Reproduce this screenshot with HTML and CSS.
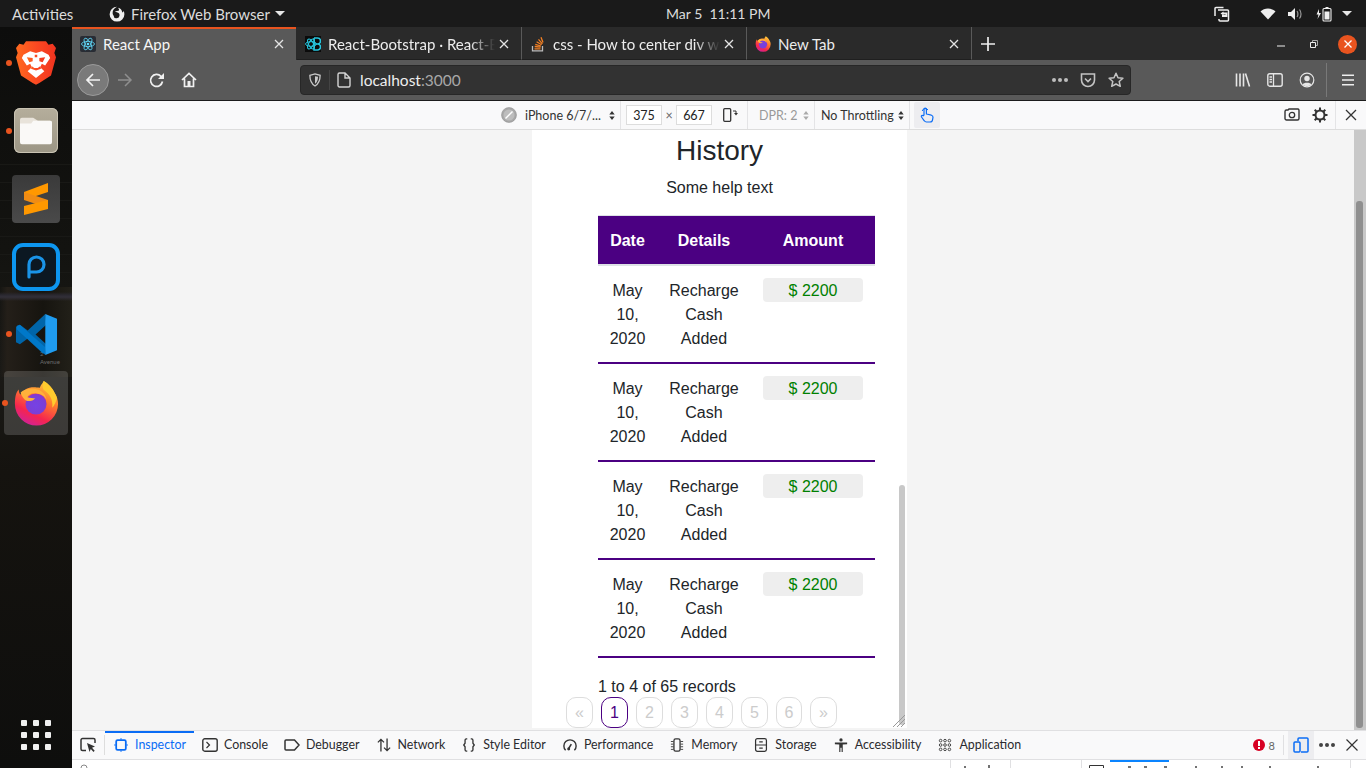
FILE: index.html
```html
<!DOCTYPE html>
<html lang="en">
<head>
<meta charset="utf-8">
<title>React App</title>
<link rel="stylesheet" href="styles.css">
</head>
<body>
<header class="topbar">
  <span class="activities">Activities</span>
  <span class="appmenu">
    <svg class="app-ico" viewBox="0 0 16 16"><path fill="#eee" d="M8 .8a7.4 7.4 0 1 0 7.4 7.4c0-1.2-.3-2.400-.8-3.400-.2 1-.7 1.500-1.300 1.700C13 4 11.400 2 9 1.700c.8.900 1.200 1.800 1 2.800-1 .2-3 .5-4 1.500.7 0 1.500 0 2.500.5a3 3 0 1 1-4 3c-.7-.7-1-1.800-.8-3.200C3.500 4.800 5 2 8 .8z"/></svg>
    <span>Firefox Web Browser</span><i class="caret"></i>
  </span>
  <span class="clock">Mar 5&nbsp; 11:11 PM</span>
  <span class="tray">
    <svg class="tray-a" viewBox="0 0 16 16"><path fill="none" stroke="#eee" stroke-width="1.500" d="M1 10V2.500a1 1 0 0 1 1-1h7.500M4 4h9.500a1 1 0 0 1 1 1V14a1 1 0 0 1-1 1H6a1 1 0 0 1-1-1v-1"/><path fill="none" stroke="#eee" stroke-width="1.800" d="M8 10h4.500V7.500H9"/><path fill="#eee" d="M9.500 5.500v4L6.500 7.500z"/></svg>
    <svg class="tray-b" viewBox="0 0 16 16"><path fill="#eee" d="M8 13.500L.5 5.500C2.500 3.500 5 2.500 8 2.500s5.500 1 7.500 3z"/></svg>
    <svg class="tray-c" viewBox="0 0 16 16"><path fill="#eee" d="M1 6h3l4-4v12l-4-4H1z"/><path fill="none" stroke="#999" stroke-width="1.200" d="M10 5c1.200 1.500 1.200 4.500 0 6M12.500 3.500c2 2.500 2 6.500 0 9"/></svg>
    <svg class="tray-d" viewBox="0 0 16 16"><path fill="#eee" d="M3 3L.5 8.500H2.500L1.500 13 5 7H3z"/><rect x="7" y="2.500" width="8" height="12.500" rx="1" fill="none" stroke="#eee" stroke-width="1.100"/><rect x="8.500" y="5.500" width="5" height="8" fill="#eee"/><rect x="9.500" y="1" width="3" height="1.500" fill="#eee"/></svg>
    <i class="caret"></i>
  </span>
</header>

<div class="desktop">
  <nav class="dock">
    <span class="wall-text">2<br>Avenue</span>
    <div class="dock-item brave">
      <i class="run-dot"></i>
      <svg viewBox="0 0 48 52">
        <defs><linearGradient id="brv" x1="0" y1="0" x2="1" y2="0"><stop offset="0" stop-color="#ff6a1f"/><stop offset=".5" stop-color="#fb4a22"/><stop offset="1" stop-color="#f0331f"/></linearGradient></defs>
        <path fill="url(#brv)" d="M12 0h24l3 4 5-1 4 5-2 6 2 5-6 22-14 9-4 2-4-2-14-9-6-22 2-5-2-6 4-5 5 1z"/>
        <path fill="#fff" d="M9 16l8-4 7 2 7-2 8 4 2 4-6 9-4-2-2 4 5 5-10 8-10-8 5-5-2-4-4 2-6-9z"/>
        <path fill="url(#brv)" d="M13 19l7 1v4l-4 1zM35 19l-7 1v4l4 1zM22.500 16h3v3h-3zM19 30l3 2h4l3-2 1 3-6 2-6-2z"/>
      </svg>
    </div>
    <div class="dock-item files">
      <i class="run-dot"></i>
      <span class="files-tile"><svg viewBox="0 0 34 28"><path fill="#e8e3da" d="M2 0h12l5 3h13a2 2 0 0 1 2 2v8H0V2a2 2 0 0 1 2-2z"/><path fill="#faf9f7" d="M14 3h18a2 2 0 0 1 2 2v21a2 2 0 0 1-2 2H2a2 2 0 0 1-2-2V6h12z"/></svg></span>
    </div>
    <div class="dock-item sublime">
      <span class="sublime-tile"><svg viewBox="0 0 24 32"><path fill="#ff9800" d="M24 0v9L0 17V9z"/><path fill="#f08c14" d="M0 9l24 8v8L0 17z"/><path fill="#ff9800" d="M24 17v9L0 32v-9z"/></svg></span>
    </div>
    <div class="dock-item pstorm">
      <span class="p-tile"><svg viewBox="0 0 20 24"><path fill="none" stroke="#1a94e8" stroke-width="3.200" stroke-linecap="round" d="M3 22V9.500a7.500 7.500 0 1 1 7.500 7.500H5"/></svg></span>
    </div>
    <div class="dock-item vscode">
      <i class="run-dot"></i>
      <svg viewBox="0 0 44 44"><path fill="#0065a9" d="M31 1L13 18 5 12 1 14v16l4 2 8-6 18 17 1-11-11-10 11-10z"/><path fill="#007acc" d="M2 13l3-1 26 23v7l-3-1L2 17z" opacity=".9"/><path fill="#1f9cf0" d="M31 1l12 5v32l-12 5z"/></svg>
    </div>
    <div class="dock-item firefox">
      <i class="run-dot"></i>
      <svg viewBox="0 0 48 48">
        <defs>
          <linearGradient id="ffa" x1="0.800" y1="0" x2="0.300" y2="1"><stop offset="0" stop-color="#ffd43b"/><stop offset=".4" stop-color="#ff7a2e"/><stop offset=".75" stop-color="#f5254f"/><stop offset="1" stop-color="#d0219a"/></linearGradient>
          <radialGradient id="ffb" cx=".5" cy=".55" r=".55"><stop offset="0" stop-color="#7542e5"/><stop offset=".8" stop-color="#7b3ed6"/><stop offset="1" stop-color="#a12dbc"/></radialGradient>
        </defs>
        <path fill="url(#ffa)" d="M2 25C2 18 3 13 6 10c0 3 1 5 2 5 2-3 5-6 9-7 6-1 7 0 11 0 1-3 4-6 4-7 5 3 9 7 11 12 3 4 4 8 4 12a22.500 22.500 0 0 1-45 0z"/>
        <circle cx="24" cy="25" r="11" fill="url(#ffb)"/>
        <path fill="#ffb13b" d="M8 13c3-3 10-6 18-3 5 2 9 6 9 12 0-4-4-7-10-8-5-1-9 1-10 4 3 1 6 1 8 1-1 2-4 3-7 3-3 0-7-4-8-9z"/>
        <path fill="#ffcb2e" d="M32 1c6 3 12 11 14 18-1 3-3 8-5 10 1-9-3-14-8-18-3-2-2-7-1-10z"/>
      </svg>
    </div>
    <div class="dock-grid"><i></i><i></i><i></i><i></i><i></i><i></i><i></i><i></i><i></i></div>
  </nav>

  <main class="browser">
    <div class="tabbar">
      <div class="tab active">
        <svg class="fav" viewBox="0 0 16 16"><rect width="16" height="16" rx="2" fill="#282c34"/><g fill="none" stroke="#61dafb" stroke-width=".8"><ellipse cx="8" cy="8" rx="6.500" ry="2.600"/><ellipse cx="8" cy="8" rx="6.500" ry="2.600" transform="rotate(60 8 8)"/><ellipse cx="8" cy="8" rx="6.500" ry="2.600" transform="rotate(120 8 8)"/></g><circle cx="8" cy="8" r="1.300" fill="#61dafb"/></svg>
        <span class="tab-title">React App</span>
        <svg class="tab-x" viewBox="0 0 10 10"><path stroke="#e4e4e4" stroke-width="1.300" d="M1 1l8 8M9 1l-8 8"/></svg>
      </div>
      <div class="tab">
        <svg class="fav" viewBox="0 0 16 16"><rect width="16" height="16" fill="#0b0b0b"/><g fill="none" stroke="#28c5dd" stroke-width="1"><ellipse cx="6" cy="8" rx="5.500" ry="2.300"/><ellipse cx="6" cy="8" rx="5.500" ry="2.300" transform="rotate(60 6 8)"/><ellipse cx="6" cy="8" rx="5.500" ry="2.300" transform="rotate(120 6 8)"/></g><path fill="none" stroke="#28c5dd" stroke-width="1.500" d="M9 2h3.500a2.500 2.500 0 0 1 0 6H9m3.500 0a3 3 0 0 1 0 6H9V2"/></svg>
        <span class="tab-title fade">React-Bootstrap · React-B</span>
        <svg class="tab-x" viewBox="0 0 10 10"><path stroke="#e4e4e4" stroke-width="1.300" d="M1 1l8 8M9 1l-8 8"/></svg>
      </div>
      <div class="tab">
        <svg class="fav" viewBox="0 0 16 16"><path fill="none" stroke="#bcbbbb" stroke-width="1.300" d="M2.500 10v4.800h10V10"/><path fill="none" stroke="#f48024" stroke-width="1.300" d="M4.500 12.800h6M4.700 10.500l5.900.6M5.300 8.300l5.600 1.700M6.600 5.800l5 3M8.500 3.400l3.900 4.500M11 1.200l2 5.400"/></svg>
        <span class="tab-title fade">css - How to center div w</span>
        <svg class="tab-x" viewBox="0 0 10 10"><path stroke="#e4e4e4" stroke-width="1.300" d="M1 1l8 8M9 1l-8 8"/></svg>
      </div>
      <div class="tab">
        <svg class="fav" viewBox="0 0 48 48"><path fill="url(#ffa)" d="M2 25C2 18 3 13 6 10c0 3 1 5 2 5 2-3 5-6 9-7 6-1 7 0 11 0 1-3 4-6 4-7 5 3 9 7 11 12 3 4 4 8 4 12a22.500 22.500 0 0 1-45 0z"/><circle cx="24" cy="25" r="12.500" fill="url(#ffb)"/><path fill="#ffb13b" d="M8 13c3-3 10-6 18-3 5 2 9 6 9 12 0-4-4-7-10-8-5-1-9 1-10 4 3 1 6 1 8 1-1 2-4 3-7 3-3 0-7-4-8-9z"/></svg>
        <span class="tab-title">New Tab</span>
        <svg class="tab-x" viewBox="0 0 10 10"><path stroke="#e4e4e4" stroke-width="1.300" d="M1 1l8 8M9 1l-8 8"/></svg>
      </div>
      <svg class="newtab" viewBox="0 0 14 14"><path stroke="#eee" stroke-width="1.700" d="M7 0v14M0 7h14"/></svg>
      <div class="winctl">
        <svg class="w-min" viewBox="0 0 8 2"><rect width="8" height="1" y=".5" fill="#eee"/></svg>
        <svg class="w-max" viewBox="0 0 8 8"><path fill="none" stroke="#eee" d="M.5 2.500h5v5h-5z"/><path fill="none" stroke="#aaa" d="M2.500 2V.5h5v5H6"/></svg>
        <span class="w-close"><svg viewBox="0 0 8 8"><path stroke="#fff" stroke-width="1.300" d="M.5.5l7 7M7.500.5l-7 7"/></svg></span>
      </div>
    </div>

    <div class="navbar">
      <span class="back"><svg viewBox="0 0 16 16"><path fill="none" stroke="#f2f2f2" stroke-width="1.700" d="M15 8H2M8 2L2 8l6 6"/></svg></span>
      <svg class="nav-ico fwd" viewBox="0 0 16 16"><path fill="none" stroke="#8f8f8f" stroke-width="1.500" d="M1 8h13M8 2l6 6-6 6"/></svg>
      <svg class="nav-ico" viewBox="0 0 16 16"><path fill="none" stroke="#f0f0f0" stroke-width="1.700" d="M13.500 9.500a6 6 0 1 1-1.500-5.200l2 1.700"/><path fill="#f0f0f0" d="M15 1v6H9z"/></svg>
      <svg class="nav-ico" viewBox="0 0 16 16"><path fill="none" stroke="#f0f0f0" stroke-width="1.700" d="M1 8l7-6.500L15 8M3.500 6.500V14.500h9V6.500"/><rect x="6.500" y="9" width="3" height="5" fill="#f0f0f0"/></svg>
      <div class="urlbar">
        <svg class="shield" viewBox="0 0 14 16"><path fill="none" stroke="#c8c8c8" stroke-width="1.500" d="M1 2.500C3 2 5 1.500 7 1c2 .5 4 1 6 1.500 0 5-1 9.500-6 12.500C2 12 1 7.500 1 2.500z"/><path fill="#c8c8c8" d="M7 3.500l3.500.8C10.500 8 9.500 10.500 7 12.500z"/></svg>
        <i class="url-sep"></i>
        <svg class="pageico" viewBox="0 0 14 16"><path fill="none" stroke="#d4d4d4" stroke-width="1.400" d="M1 2.500a1.500 1.500 0 0 1 1.500-1.500H8l5 5v7.500a1.500 1.500 0 0 1-1.500 1.500h-9A1.500 1.500 0 0 1 1 13.500zM8 1v5h5"/></svg>
        <span class="url">localhost<span class="url-dim">:3000</span></span>
        <span class="dots"><i></i><i></i><i></i></span>
        <svg class="pocket" viewBox="0 0 16 16"><path fill="none" stroke="#c4c4c4" stroke-width="1.600" d="M1.500 2h13v6a6.500 6.500 0 0 1-13 0z"/><path fill="none" stroke="#c4c4c4" stroke-width="1.600" d="M5 6.500l3 3 3-3"/></svg>
        <svg class="star" viewBox="0 0 16 16"><path fill="none" stroke="#c4c4c4" stroke-width="1.500" stroke-linejoin="round" d="M8 1.300l2 4.500 4.900.5-3.700 3.200 1.100 4.800L8 12l-4.300 2.300 1.100-4.800L1.100 6.300 6 5.800z"/></svg>
      </div>
      <svg class="lib" viewBox="0 0 16 16"><path stroke="#e6e6e6" stroke-width="1.600" fill="none" d="M1.500 1.500v13M5 1.500v13M8.500 1.500v13M10.500 1.500l4 13"/></svg>
      <svg class="side" viewBox="0 0 16 16"><rect x=".8" y="1.800" width="14.400" height="12.400" rx="2" fill="none" stroke="#e6e6e6" stroke-width="1.400"/><path stroke="#e6e6e6" stroke-width="1.300" d="M6.500 2v12M2.500 5H5M2.500 7.500H5M2.500 10H5"/></svg>
      <svg class="acct" viewBox="0 0 16 16"><circle cx="8" cy="8" r="6.800" fill="none" stroke="#e6e6e6" stroke-width="1.200"/><circle cx="8" cy="6.500" r="2.700" fill="#e6e6e6"/><path fill="#e6e6e6" d="M3.500 12.500c1-2.500 8-2.500 9 0-2 2-7 2-9 0z"/></svg>
      <i class="nav-sep"></i>
      <svg class="menu" viewBox="0 0 12 12"><path stroke="#eee" stroke-width="1.600" d="M0 1.200h12M0 6h12M0 10.800h12"/></svg>
    </div>

    <div class="rdm">
      <svg class="noglobe" viewBox="0 0 16 16"><circle cx="8" cy="8" r="7.500" fill="#a8a8a8" stroke="#888" stroke-width=".5"/><circle cx="8" cy="8" r="5.500" fill="#bdbdbd"/><path stroke="#fff" stroke-width="1.500" d="M4.500 11.500l7-7"/></svg>
      <span class="rdm-label dev">iPhone 6/7/...</span>
      <svg class="updown" viewBox="0 0 6 10"><path fill="#333" d="M3 0l3 4H0zM3 10L0 6h6z"/></svg>
      <i class="rdm-sep"></i>
      <span class="num first">375</span>
      <span class="times">×</span>
      <span class="num">667</span>
      <svg class="rotate" viewBox="0 0 16 14"><rect x=".7" y=".7" width="7" height="12.600" rx="1" fill="none" stroke="#333" stroke-width="1.300"/><path fill="none" stroke="#333" d="M10 3h3v3"/><path fill="#333" d="M11 5h4l-2 2.500z"/></svg>
      <i class="rdm-sep r2"></i>
      <span class="rdm-label dpr">DPR: 2</span>
      <svg class="updown dim" viewBox="0 0 6 10"><path fill="#aaa" d="M3 0l3 4H0zM3 10L0 6h6z"/></svg>
      <i class="rdm-sep r3"></i>
      <span class="rdm-label thr">No Throttling</span>
      <svg class="updown" viewBox="0 0 6 10"><path fill="#333" d="M3 0l3 4H0zM3 10L0 6h6z"/></svg>
      <i class="rdm-sep r4"></i>
      <span class="touch"><svg viewBox="0 0 14 16"><path fill="none" stroke="#0a6cf5" stroke-width="1.200" stroke-linejoin="round" d="M4 8V2.300a1.200 1.200 0 0 1 2.400 0V7l5 1.200c1 .3 1.600 1 1.600 2l-.4 2.400c-.2 1.500-1 2.400-2.600 2.400H6.500c-1 0-1.700-.4-2.200-1.200L1.500 10c-.7-1.300.8-2.200 1.600-1.200z"/><path fill="none" stroke="#0a6cf5" d="M2.200 4a3.200 3.200 0 0 1 5.800-1"/></svg></span>
      <svg class="cam" viewBox="0 0 16 14"><path fill="none" stroke="#333" stroke-width="1.400" d="M1 3.500A1.500 1.500 0 0 1 2.500 2H4l1-1h9a1.500 1.500 0 0 1 1 1.500v8a1.500 1.500 0 0 1-1.500 1.500h-11A1.500 1.500 0 0 1 1 10.500z"/><circle cx="8" cy="7" r="2.700" fill="none" stroke="#333" stroke-width="1.300"/></svg>
      <svg class="gear" viewBox="0 0 16 16"><g stroke="#333" stroke-width="2"><path d="M8 .5v15M.5 8h15M2.700 2.700l10.600 10.600M13.300 2.700L2.700 13.300"/></g><circle cx="8" cy="8" r="4.500" fill="#f9f9fa" stroke="#333" stroke-width="2"/></svg>
      <i class="rdm-sep r5"></i>
      <svg class="rdm-x" viewBox="0 0 12 12"><path stroke="#333" stroke-width="1.300" d="M1 1l10 10M11 1L1 11"/></svg>
    </div>

    <div class="viewport">
      <section class="phone">
        <h1 class="title">History</h1>
        <p class="help">Some help text</p>
        <table class="history">
          <colgroup><col class="c1"><col class="c2"><col class="c3"></colgroup>
          <thead><tr><th>Date</th><th>Details</th><th>Amount</th></tr></thead>
          <tbody>
            <tr><td>May 10, 2020</td><td>Recharge Cash Added</td><td><span class="amount">$ 2200</span></td></tr>
            <tr><td>May 10, 2020</td><td>Recharge Cash Added</td><td><span class="amount">$ 2200</span></td></tr>
            <tr><td>May 10, 2020</td><td>Recharge Cash Added</td><td><span class="amount">$ 2200</span></td></tr>
            <tr><td>May 10, 2020</td><td>Recharge Cash Added</td><td><span class="amount">$ 2200</span></td></tr>
          </tbody>
        </table>
        <p class="records">1 to 4 of 65 records</p>
        <ul class="pager">
          <li>«</li><li class="on">1</li><li>2</li><li>3</li><li>4</li><li>5</li><li>6</li><li>»</li>
        </ul>
        <i class="phone-thumb"></i>
        <svg class="resize" viewBox="0 0 12 12"><path stroke="#999" d="M0 12L12 0M4 12l8-8M8 12l4-4"/></svg>
      </section>
      <div class="outer-scroll"><i></i></div>
    </div>

    <div class="devtabs">
      <svg class="pick" viewBox="0 0 16 16"><path fill="none" stroke="#333" stroke-width="1.500" d="M6 13.500H2.500a1.500 1.500 0 0 1-1.500-1.500V3a1.500 1.500 0 0 1 1.500-1.500h11A1.500 1.500 0 0 1 15 3v3"/><path fill="#333" d="M7 6l8 3.500-3 1.300 2.700 3-1.200 1.200-2.700-3L9.500 15z"/></svg>
      <i class="pick-sep"></i>
      <span class="dt sel"><svg viewBox="0 0 16 16"><rect x="2.500" y="2.500" width="11" height="11" rx="1.500" fill="none" stroke="#0a6cf5" stroke-width="2"/><path stroke="#0a6cf5" d="M8 0v2M8 14v2M0 8h2M14 8h2"/></svg>Inspector</span>
      <span class="dt"><svg viewBox="0 0 16 14"><rect x=".8" y=".8" width="14.400" height="12.400" rx="2" fill="none" stroke="#333" stroke-width="1.400"/><path fill="none" stroke="#333" stroke-width="1.200" d="M4.500 4l3 3-3 3"/></svg>Console</span>
      <span class="dt"><svg viewBox="0 0 16 12"><path fill="none" stroke="#333" stroke-width="1.500" d="M2 1h8.500l4.500 5-4.500 5H2a1 1 0 0 1-1-1V2a1 1 0 0 1 1-1z"/></svg>Debugger</span>
      <span class="dt"><svg viewBox="0 0 16 16"><path fill="none" stroke="#333" stroke-width="1.500" d="M4.500 15.500V1.500M1 5l3.500-3.500L8 5M11.500.5v14M8 11l3.500 3.500L15 11"/></svg>Network</span>
      <span class="dt"><svg viewBox="0 0 14 16"><path fill="none" stroke="#333" stroke-width="1.500" d="M5 1H4a1.500 1.500 0 0 0-1.500 1.500V6L1 8l1.500 2v3.500A1.500 1.500 0 0 0 4 15h1M9 1h1a1.500 1.500 0 0 1 1.500 1.500V6L13 8l-1.500 2v3.500A1.500 1.500 0 0 1 10 15H9"/></svg>Style Editor</span>
      <span class="dt"><svg viewBox="0 0 16 16"><path fill="none" stroke="#333" stroke-width="1.600" d="M3 14A7 7 0 1 1 13 14"/><path stroke="#333" stroke-width="1.800" d="M6.500 12l3-5"/><circle cx="6.500" cy="12.500" r="1.700" fill="#333"/></svg>Performance</span>
      <span class="dt"><svg viewBox="0 0 16 16"><rect x="4.500" y="1" width="7" height="14" rx="2" fill="none" stroke="#333" stroke-width="1.500"/><path stroke="#333" d="M1 4h3M1 7h3M1 10h3M1 13h3M12 4h3M12 7h3M12 10h3M12 13h3"/></svg>Memory</span>
      <span class="dt"><svg viewBox="0 0 14 16"><rect x=".8" y=".8" width="12.400" height="14.400" rx="2" fill="none" stroke="#333" stroke-width="1.400"/><path stroke="#333" stroke-width="1.300" d="M1 8h12M5 4.500h4M5 11.500h4"/></svg>Storage</span>
      <span class="dt"><svg viewBox="0 0 16 16"><circle cx="8" cy="2.200" r="1.900" fill="#333"/><path fill="#333" d="M1 5h14v2l-5 .5V16H8.700V11H7.300v5H6V7.500L1 7z"/></svg>Accessibility</span>
      <span class="dt"><svg viewBox="0 0 16 16"><g fill="none" stroke="#333"><circle cx="3" cy="3" r="1.500"/><circle cx="8" cy="3" r="1.500"/><circle cx="13" cy="3" r="1.500"/><circle cx="3" cy="8" r="1.500"/><circle cx="8" cy="8" r="1.500"/><circle cx="13" cy="8" r="1.500"/><circle cx="3" cy="13" r="1.500"/><circle cx="8" cy="13" r="1.500"/><circle cx="13" cy="13" r="1.500"/></g></svg>Application</span>
      <span class="errs"><svg viewBox="0 0 12 12"><circle cx="6" cy="6" r="6" fill="#d70022"/><rect x="5" y="2" width="2" height="5" fill="#fff"/><rect x="5" y="8" width="2" height="2" fill="#fff"/></svg>8</span>
      <i class="dev-sep"></i>
      <span class="dock-side"><svg viewBox="0 0 16 16"><path fill="none" stroke="#0a6cf5" stroke-width="1.500" d="M5 4V2a1 1 0 0 1 1-1h8a1 1 0 0 1 1 1v12a1 1 0 0 1-1 1H8"/><rect x="1" y="5" width="6" height="10" rx="1" fill="none" stroke="#0a6cf5" stroke-width="1.500"/></svg></span>
      <span class="more"><i></i><i></i><i></i></span>
      <svg class="dev-x" viewBox="0 0 12 12"><path stroke="#333" stroke-width="1.200" d="M.5.500l11 11M11.500.500l-11 11"/></svg>
    </div>
    <div class="devpanel">
      <svg class="panel-strip" viewBox="0 0 1294 8">
        <path stroke="#e0e0e2" d="M878.500 0v8M938.500 0v8M1009.500 0v8M1278.500 0v8"/>
        <path stroke="#0a84ff" stroke-width="2" d="M1038 1h59"/>
        <path fill="none" stroke="#888" d="M9 8a3 3 0 0 1 6 0"/>
        <path stroke="#444" stroke-width="1.500" d="M893 6v2M917 5v3M1056 7h3M1072 7h3M1092 7h3M1124 6v2M1150 6v2M1170 6v2M1198 6v2M1246 6v2"/>
        <path fill="none" stroke="#333" d="M1017.500 8V5.500h14V8"/>
      </svg>
    </div>
  </main>
</div>
</body>
</html>
```
FILE: styles.css
```css
* { box-sizing: border-box; }
html, body { margin: 0; padding: 0; }
body { width: 1366px; height: 768px; overflow: hidden; background: #111; font-family: "Lato", "Noto Sans", sans-serif; }
i { display: block; font-style: normal; }
svg { display: block; flex: none; }

/* GNOME top bar */
.topbar { height: 27px; background: #1a1a1a; color: #dcdcdc; font-size: 15px; display: flex; align-items: center; white-space: nowrap; }
.activities { margin-left: 12px; width: 97px; }
.appmenu { display: flex; align-items: center; width: 557px; }
.app-ico { width: 16px; height: 16px; margin-right: 6px; }
.caret { width: 0; height: 0; border: 5px solid transparent; border-top: 5px solid #e6e6e6; border-bottom: 0; margin-left: 5px; }
.clock { width: 548px; font-size: 14px; }
.tray { display: flex; align-items: center; }
.tray-a { width: 16px; height: 16px; }
.tray-b { width: 16px; height: 16px; margin-left: 30px; }
.tray-c { width: 16px; height: 16px; margin-left: 11px; }
.tray-d { width: 16px; height: 16px; margin-left: 13px; }
.tray .caret { margin-left: 10px; }

.desktop { display: flex; height: 741px; }

/* Dock */
.dock { width: 72px; position: relative; display: flex; flex-direction: column; align-items: center;
  background:
    linear-gradient(180deg, transparent 265px, #2a2830 268px, #322f38 270px, transparent 274px),
    linear-gradient(90deg, transparent 0, #241f19 10%, #16140f 60%, #222019 100%) 0 260px / 100% 90px no-repeat,
    repeating-linear-gradient(180deg, transparent 0, transparent 17px, #191916 17px, #191916 18px) 0 120px / 100% 130px no-repeat,
    linear-gradient(180deg, #0d0d0c 0, #131310 30%, #1a1916 46%, #15130f 60%, #0e0e0d 100%); }
.wall-text { position: absolute; left: 40px; top: 323px; font-size: 6px; line-height: 8px; color: #6c6c6c; }
.dock-item { position: relative; display: flex; justify-content: center; align-items: center; width: 64px; }
.run-dot { position: absolute; left: 2px; top: 50%; width: 6px; height: 6px; margin-top: -3px; border-radius: 50%; background: #e9541f; }
.brave { height: 68px; margin-top: 2px; }
.brave svg { width: 40px; height: 48px; }
.files { height: 57px; margin-top: 5px; }
.files-tile { width: 44px; height: 45px; border-radius: 6px; background: linear-gradient(#b5ae9c, #9c9685); box-shadow: inset 0 0 0 1px #c9c3b3; display: flex; align-items: center; justify-content: center; }
.files-tile svg { width: 32px; height: 28px; }
.sublime { height: 64px; margin-top: 8px; }
.sublime-tile { width: 48px; height: 48px; border-radius: 4px; background: linear-gradient(#3a3a3a, #4a4a4a); display: flex; align-items: center; justify-content: center; }
.sublime-tile svg { width: 24px; height: 32px; }
.pstorm { height: 64px; margin-top: 4px; }
.p-tile { width: 48px; height: 48px; border: 4px solid #0d96f0; border-radius: 11px; background: #0c1822; display: flex; align-items: center; justify-content: center; }
.p-tile svg { width: 20px; height: 24px; }
.vscode { height: 64px; margin-top: 3px; }
.vscode svg { width: 43px; height: 43px; }
.firefox { height: 64px; margin-top: 5px; background: rgba(255,255,255,.16); border-radius: 4px; }
.firefox svg { width: 46px; height: 48px; }
.firefox .run-dot { left: -2px; }
.dock-grid { margin-top: auto; margin-bottom: 18px; display: grid; grid-template-columns: repeat(3, 6px); grid-auto-rows: 6px; gap: 6px; }
.dock-grid i { background: #f0f0f0; border-radius: 1px; }

/* Browser */
.browser { width: 1294px; display: flex; flex-direction: column; background: #f5f5f5; }
.tabbar { height: 33px; background: #2a2a2a; display: flex; align-items: stretch; }
.tab { width: 225px; display: flex; align-items: center; padding: 1px 8px 0; color: #ececec; font-size: 15px; border-right: 1px solid #5a5a5a; border-bottom: 1px solid #1f1f1f; }
.tab.active { background: #595959; box-shadow: inset 0 2px 0 #e9541f; border-right: 0; border-bottom: 0; padding-bottom: 1px; width: 224px; margin-right: 1px; color: #f6f6f6; }
.fav { width: 16px; height: 16px; margin-right: 7px; }
.tab-title { flex: 1; overflow: hidden; white-space: nowrap; }
.fade { -webkit-mask-image: linear-gradient(90deg, #000 85%, transparent 100%); mask-image: linear-gradient(90deg, #000 85%, transparent 100%); }
.tab-x { width: 10px; height: 10px; margin-left: 4px; margin-right: 4px; }
.newtab { width: 14px; height: 14px; margin: auto 0 auto 9px; }
.winctl { margin-left: auto; display: flex; align-items: center; padding-top: 1px; }
.w-min { width: 8px; height: 2px; margin-top: 4px; }
.w-max { width: 8px; height: 8px; margin-left: 25px; }
.w-close { width: 19px; height: 19px; border-radius: 50%; background: #e9541f; margin: 0 9px 0 20px; display: flex; align-items: center; justify-content: center; }
.w-close svg { width: 8px; height: 8px; }

.navbar { height: 41px; background: #595959; border-bottom: 1px solid #1c1c1c; display: flex; align-items: center; }
.back { width: 32px; height: 32px; border-radius: 50%; background: #7a7a7a; border: 1px solid #9a9a9a; margin-left: 5px; display: flex; align-items: center; justify-content: center; }
.back svg { width: 16px; height: 16px; }
.nav-ico { width: 16px; height: 16px; margin-left: 16px; }
.fwd { margin-left: 8px; }
.urlbar { width: 831px; height: 30px; margin-left: 103px; background: #323232; border: 1px solid #272727; border-radius: 4px; display: flex; align-items: center; color: #eee; font-size: 15.500px; }
.shield { width: 12px; height: 14px; margin-left: 8px; }
.url-sep { width: 1px; height: 20px; background: #444; margin-left: 8px; }
.pageico { width: 14px; height: 16px; margin-left: 7px; }
.url { margin-left: 9px; }
.url-dim { color: #a8a8a8; }
.dots { display: flex; gap: 2px; margin-left: auto; }
.dots i { width: 4px; height: 4px; border-radius: 50%; background: #bdbdbd; }
.pocket { width: 16px; height: 16px; margin-left: 12px; }
.star { width: 16px; height: 16px; margin: 0 6px 0 12px; }
.lib { width: 16px; height: 16px; margin-left: 104px; }
.side { width: 16px; height: 16px; margin-left: 16px; }
.acct { width: 16px; height: 16px; margin-left: 16px; }
.nav-sep { width: 1px; height: 34px; background: #797979; margin-left: 11px; }
.menu { width: 12px; height: 12px; margin-left: 15px; }

.rdm { height: 29px; background: #f9f9fa; border-bottom: 1px solid #ddd; display: flex; align-items: center; font-size: 12.500px; color: #333; }
.noglobe { width: 16px; height: 16px; margin-left: 429px; }
.rdm-label { white-space: nowrap; }
.dev { margin-left: 8px; width: 84px; }
.updown { width: 6px; height: 9px; }
.dim { margin-left: 5px; }
.rdm-sep { width: 1px; height: 28px; background: #e4e4e6; margin-left: 5px; }
.num { width: 36px; height: 20px; border: 1px solid #ddd; background: #fff; color: #222; display: flex; align-items: center; justify-content: center; }
.first { margin-left: 5px; }
.times { width: 14px; text-align: center; color: #666; }
.rotate { width: 16px; height: 14px; margin-left: 11px; }
.r2 { margin-left: 8px; }
.dpr { color: #999; margin-left: 11px; width: 39px; }
.r3 { margin-left: 5px; }
.thr { margin-left: 6px; width: 77px; }
.r4 { margin-left: 5px; }
.touch { width: 26px; height: 26px; background: #ededf0; margin-left: 4px; display: flex; align-items: center; justify-content: center; border-radius: 2px; }
.touch svg { width: 14px; height: 16px; }
.cam { width: 16px; height: 14px; margin-left: 344px; }
.gear { width: 16px; height: 16px; margin-left: 12px; }
.r5 { margin-left: 7px; }
.rdm-x { width: 12px; height: 12px; margin-left: 9px; }

/* Responsive viewport */
.viewport { height: 600px; background: #f4f4f4; display: flex; position: relative; }
.phone { width: 375px; height: 598px; margin-left: 460px; background: #fff; position: relative; overflow: hidden; padding: 4px 32px 0 66px; font-family: "Liberation Sans", Arial, sans-serif; color: #212529; font-size: 16px; line-height: 24px; }
.title { margin: 0 -32px 8px -66px; font-size: 28px; font-weight: 500; line-height: 34px; text-align: center; }
.help { margin: 0 -32px 15px -66px; text-align: center; }
.history { width: 277px; table-layout: fixed; border-collapse: collapse; text-align: center; }
.c1 { width: 59px; }
.c2 { width: 94px; }
.c3 { width: 124px; }
.history th { background: #4b0082; color: #fff; font-weight: 700; padding: 13px 4px 11px; border-top: 1px solid #dee2e6; border-bottom: 2px solid #dee2e6; }
.history td { padding: 13px 10px 11px; vertical-align: top; border-bottom: 2px solid #4b0082; }
.history td:last-child { padding: 12px; }
.amount { display: block; height: 24px; line-height: 26px; background: #eee; border-radius: 4px; color: #008000; }
.records { margin: 17px 0 0; height: 22px; }
.pager { list-style: none; margin: 0 0 0 -32px; padding: 0; display: flex; gap: 8px; }
.pager li { width: 27px; height: 31px; border: 1px solid #ddd; border-radius: 10px; color: #ccc; display: flex; align-items: center; justify-content: center; background: #fff; }
.pager li:nth-child(7) { width: 26px; }
.pager li.on { border-color: #4b0082; color: #4b0082; }
.phone-thumb { position: absolute; left: 367px; top: 355px; width: 6px; height: 240px; border-radius: 3px; background: #c8c8c8; }
.resize { position: absolute; right: 2px; bottom: 1px; width: 12px; height: 12px; }
.outer-scroll { position: absolute; right: 0; top: 0; width: 12px; height: 600px; background: #c8c8c8; }
.outer-scroll i { margin: 71px 0 0 2px; width: 7px; height: 527px; border-radius: 3px; background: #8f8f8f; }

/* DevTools */
.devtabs { height: 30px; background: #f9f9fa; border-top: 1px solid #e0e0e2; border-bottom: 1px solid #e0e0e2; display: flex; align-items: center; font-size: 12.400px; color: #2a2a2e; }
.pick { width: 16px; height: 16px; margin-left: 8px; }
.pick-sep { width: 1px; height: 20px; background: #ddd; margin-left: 8px; }
.dt { display: flex; align-items: center; gap: 6px; padding: 0 8px 2px; height: 100%; white-space: nowrap; }
.dt svg { width: 16px; height: 14px; margin-top: 1px; }
.sel { color: #0a6cf5; box-shadow: inset 0 2px 0 #0a6cf5; }
.errs { margin-left: auto; display: flex; align-items: center; gap: 4px; color: #666; font-size: 11px; }
.errs svg { width: 12px; height: 12px; }
.dev-sep { width: 1px; height: 20px; background: #e0e0e2; margin-left: 8px; }
.dock-side { width: 26px; height: 28px; background: #ededf0; margin-left: 4px; display: flex; align-items: center; justify-content: center; }
.dock-side svg { width: 16px; height: 16px; }
.more { display: flex; gap: 2px; margin-left: 5px; }
.more i { width: 4px; height: 4px; border-radius: 50%; background: #444; }
.dev-x { width: 12px; height: 12px; margin: 0 8px 0 11px; }
.devpanel { height: 8px; background: #fff; }
.panel-strip { width: 1294px; height: 8px; }
```
